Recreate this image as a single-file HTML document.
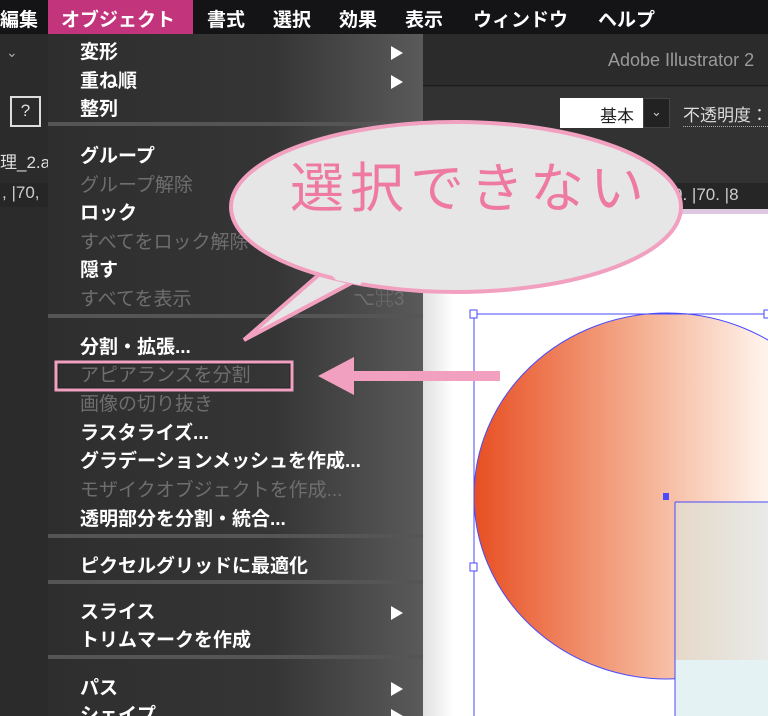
<!DOCTYPE html>
<html><head><meta charset="utf-8"><style>
*{margin:0;padding:0;box-sizing:border-box}
html,body{width:768px;height:716px;overflow:hidden}
body{background:#2a2a2a;position:relative;font-family:"Liberation Sans","Noto Sans CJK JP",sans-serif}
.abs{position:absolute}
.mb{left:0;top:0;width:768px;height:34px;background:#141416;color:#fff;font-size:19px;font-weight:bold}
.mb span{position:absolute;top:5px}
.menu{left:48px;top:34px;width:375px;height:682px;background:linear-gradient(90deg,#2e2e2e 0%,#353535 60%,#5a5a5a 100%)}
.it{position:absolute;left:32px;font-size:19px;font-weight:bold;color:#fff;line-height:22px;white-space:nowrap}
.dis{color:#6e6e6e;font-weight:normal}
.ar{position:absolute;left:343px;width:0;height:0;border-left:12px solid #fff;border-top:7px solid transparent;border-bottom:7px solid transparent}
.sep{position:absolute;left:0;width:375px;height:4px;background:#555}
</style></head><body>
<div class="abs" style="left:0;top:34px;width:48px;height:682px;background:#2b2b2b"></div>
<div class="abs" style="left:6px;top:44px;color:#aaa;font-size:14px">⌄</div>
<div class="abs" style="left:10px;top:96px;width:31px;height:31px;border:2px solid #ddd;color:#ddd;font-size:17px;text-align:center;line-height:26px">?</div>
<div class="abs" style="left:0;top:148px;color:#ddd;font-size:17px">理_2.a</div>
<div class="abs" style="left:0;top:183px;width:48px;height:24px;background:#262626;color:#ccc;font-size:17px;padding-left:2px">, |70,</div>
<div class="abs" style="left:423px;top:34px;width:345px;height:52px;background:#2b2b2b;border-bottom:1px solid #1c1c1c"></div>
<div class="abs" style="left:608px;top:50px;color:#9a9a9a;font-size:18px">Adobe Illustrator 2</div>
<div class="abs" style="left:423px;top:87px;width:345px;height:96px;background:#323232"></div>
<div class="abs" style="left:560px;top:98px;width:83px;height:30px;background:#fff;color:#222;font-size:17px;padding:4px 0 0 40px">基本</div>
<div class="abs" style="left:643px;top:98px;width:27px;height:30px;background:#222;border:1px solid #444;color:#ccc;font-size:13px;text-align:center;line-height:26px">⌄</div>
<div class="abs" style="left:683px;top:101px;color:#ddd;font-size:17px;border-bottom:1px dotted #aaa">不透明度：</div>
<div class="abs" style="left:423px;top:183px;width:345px;height:26px;background:#262626;color:#ccc;font-size:17px;padding:2px 0 0 250px;white-space:nowrap">0.&nbsp;|70.&nbsp;|8</div>
<div class="abs" style="left:423px;top:209px;width:345px;height:5px;background:#dcc6e0"></div>
<div class="abs" style="left:423px;top:214px;width:345px;height:502px;background:#fff"></div>
<div class="abs" style="left:423px;top:214px;width:30px;height:502px;background:linear-gradient(90deg,#e0e0e0,#fff)"></div>
<svg class="abs" style="left:0;top:0" width="768" height="716">
<defs>
<linearGradient id="g1" x1="0" x2="1"><stop offset="0" stop-color="#e84e22"/><stop offset="0.45" stop-color="#f5b396"/><stop offset="0.75" stop-color="#fff2ea"/><stop offset="1" stop-color="#fff"/></linearGradient>
<linearGradient id="g2" x1="0" x2="1"><stop offset="0" stop-color="#e6d8c8"/><stop offset="1" stop-color="#e8ecea"/></linearGradient>
</defs>
<ellipse cx="667" cy="496" rx="193" ry="183" fill="url(#g1)" stroke="#4a4aff" stroke-width="1"/>
<rect x="675" y="502" width="100" height="176" fill="url(#g2)"/>
<rect x="675" y="660" width="100" height="60" fill="#e4f2f3"/>
<line x1="675" y1="502" x2="675" y2="716" stroke="#4a4aff"/>
<line x1="675" y1="502" x2="768" y2="502" stroke="#4a4aff"/>
<line x1="474" y1="314" x2="768" y2="314" stroke="#4a4aff"/>
<line x1="474" y1="314" x2="474" y2="716" stroke="#4a4aff"/>
<rect x="470" y="310" width="7" height="8" fill="#fff" stroke="#4a4aff"/>
<rect x="764" y="310" width="7" height="8" fill="#fff" stroke="#4a4aff"/>
<rect x="470" y="563" width="7" height="8" fill="#fff" stroke="#4a4aff"/>
<rect x="663" y="493" width="6" height="7" fill="#4a4aff"/>
</svg>
<div class="abs mb">
<span style="left:0">編集</span>
<div class="abs" style="left:48px;top:0;width:145px;height:34px;background:#c2357c"></div>
<span style="left:61px">オブジェクト</span>
<span style="left:207px">書式</span><span style="left:273px">選択</span><span style="left:339px">効果</span><span style="left:405px">表示</span><span style="left:473px">ウィンドウ</span><span style="left:598px">ヘルプ</span>
</div>
<div class="abs menu">
<div class="it" style="top:8px">変形</div><div class="ar" style="top:12px"></div>
<div class="it" style="top:37px">重ね順</div><div class="ar" style="top:41px"></div>
<div class="it" style="top:65px">整列</div>
<div class="sep" style="top:88px"></div>
<div class="it" style="top:112px">グループ</div>
<div class="it dis" style="top:141px">グループ解除</div>
<div class="it" style="top:169px">ロック</div>
<div class="it dis" style="top:198px">すべてをロック解除</div>
<div class="it" style="top:226px">隠す</div><div class="ar" style="top:230px"></div>
<div class="it dis" style="top:255px">すべてを表示</div>
<div class="it dis" style="top:255px;left:305px">⌥⌘3</div>
<div class="sep" style="top:280px"></div>
<div class="it" style="top:303px">分割・拡張...</div>
<div class="it dis" style="top:331px">アピアランスを分割</div>
<div class="it dis" style="top:360px">画像の切り抜き</div>
<div class="it" style="top:389px">ラスタライズ...</div>
<div class="it" style="top:417px">グラデーションメッシュを作成...</div>
<div class="it dis" style="top:446px">モザイクオブジェクトを作成...</div>
<div class="it" style="top:475px">透明部分を分割・統合...</div>
<div class="sep" style="top:500px"></div>
<div class="it" style="top:522px">ピクセルグリッドに最適化</div>
<div class="sep" style="top:546px"></div>
<div class="it" style="top:568px">スライス</div><div class="ar" style="top:572px"></div>
<div class="it" style="top:596px">トリムマークを作成</div>
<div class="sep" style="top:621px"></div>
<div class="it" style="top:644px">パス</div><div class="ar" style="top:648px"></div>
<div class="it" style="top:671px">シェイプ</div><div class="ar" style="top:675px"></div>
</div>
<svg class="abs" style="left:0;top:0" width="768" height="716">
<rect x="56" y="362" width="236" height="28" fill="none" stroke="#f2a0bf" stroke-width="3"/>
<rect x="58" y="364" width="232" height="24" fill="none" stroke="#222" stroke-width="1"/>
<polygon points="318,376 354,357 354,371 500,371 500,381 354,381 354,395" fill="#f2a0bf"/>
<path d="M330,265 L244,340 L372,272 Z" fill="#e6e6e6" stroke="#f2a0bf" stroke-width="4" stroke-linejoin="miter"/>
<ellipse cx="456" cy="207" rx="225" ry="85" fill="#e6e6e6" stroke="#f2a0bf" stroke-width="4"/>
<path d="M320,262 L372,270 L360,285 L336,280 Z" fill="#e6e6e6"/>
<text x="290" y="207" font-size="54" fill="#ee7aa2" font-family="Liberation Sans, Noto Sans CJK JP, sans-serif" letter-spacing="6">選択できない</text>
</svg>
</body></html>
